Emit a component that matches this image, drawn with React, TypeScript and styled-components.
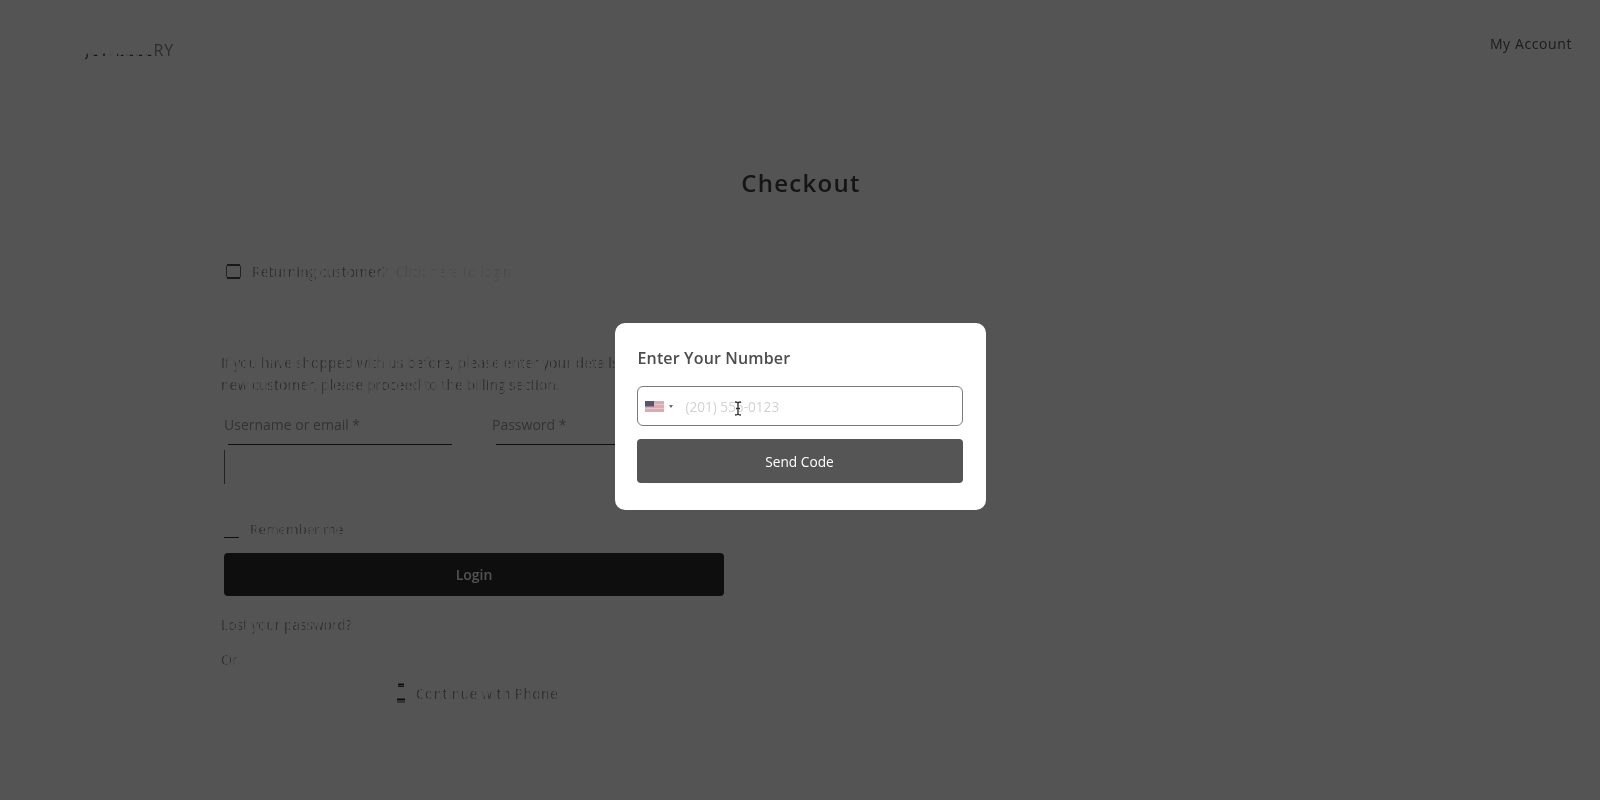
import styled, { createGlobalStyle, css } from 'styled-components';

const GlobalStyle = createGlobalStyle`
    html, body {
        margin: 0;
        padding: 0;
        height: 800px;
        overflow: hidden;
        background: #fff;
        font-family: "Open Sans", "Liberation Sans", sans-serif;
    }
    * { box-sizing: border-box; }
`;

// text behind the backdrop is half broken up in the screenshot
const broken = css`
    -webkit-mask-image: repeating-linear-gradient(90deg, #000 0 3px, rgba(0, 0, 0, 0.3) 3px 5px, #000 5px 6px, rgba(0, 0, 0, 0.15) 6px 9px);
    mask-image: repeating-linear-gradient(90deg, #000 0 3px, rgba(0, 0, 0, 0.3) 3px 5px, #000 5px 6px, rgba(0, 0, 0, 0.15) 6px 9px);
`;

const Page = styled.div`
    height: 800px;
    position: relative;
    overflow: hidden;
    background: #fff;
    filter: blur(0.35px);
`;

const Header = styled.header`
    height: 100px;
    display: flex;
    justify-content: space-between;
    align-items: flex-start;
    padding: 32px 28px 0 85px;
`;

const Logo = styled.div`
    margin-top: 8px;
    font-size: 16px;
    line-height: 20px;
    letter-spacing: 0.85px;
    width: 90px;
    white-space: nowrap;
    color: #8a8a8a;
`;

const LogoFaded = styled.span`
    background: linear-gradient(to bottom, transparent 62%, #444 72%);
    -webkit-background-clip: text;
    background-clip: text;
    color: transparent;
    ${broken}
`;

const AccountLink = styled.a`
    font-size: 14px;
    line-height: 24px;
    letter-spacing: 0.6px;
    color: #555;
`;

const Title = styled.h1`
    margin: 64px 0 0;
    padding-left: 2px;
    text-align: center;
    font-size: 24px;
    line-height: 38px;
    font-weight: 600;
    letter-spacing: 1.3px;
    color: #404040;
`;

const Content = styled.main`
    width: 510px;
    margin: 57px 0 0 221px;
`;

const Notice = styled.div`
    display: flex;
    align-items: center;
    height: 24px;
    margin-left: 4px;
    font-size: 14px;
    color: #8c8c8c;
`;

const NoticeIcon = styled.svg`
    width: 17px;
    height: 17px;
    margin-right: 10px;
    flex: none;
`;

const NoticeText = styled.span`
    ${broken}
`;

const NoticeLink = styled.span`
    margin-left: 8px;
    color: #8f8f8f;
    opacity: 0.3;
    ${broken}
`;

const Intro = styled.p`
    margin: 69px 0 0;
    width: 510px;
    font-size: 14px;
    line-height: 22px;
    color: #8c8c8c;
    white-space: nowrap;
    ${broken}
`;

const FieldRow = styled.div`
    display: grid;
    grid-template-columns: 228px 232px;
    column-gap: 40px;
    margin: 18px 0 0 3px;
`;

const Field = styled.div`
    display: flex;
    flex-direction: column;
`;

const Label = styled.label`
    font-size: 14px;
    line-height: 22px;
    color: #9a9a9a;
`;

const FieldLine = styled.div`
    height: 1px;
    margin: 8px 0 0 4px;
    background: #303030;
`;

const FieldCaret = styled.div`
    width: 1px;
    height: 34px;
    margin-top: 5px;
    background: #6a6a6a;
`;

const RememberRow = styled.div`
    display: flex;
    align-items: center;
    gap: 11px;
    height: 22px;
    margin: 34px 0 0 3px;
    font-size: 13.5px;
    color: #8c8c8c;
`;

const RememberBox = styled.span`
    display: block;
    width: 15px;
    height: 15px;
    margin-top: 3px;
    border-bottom: 1px solid #303030;
`;

const RememberText = styled.span`
    ${broken}
`;

const LoginButton = styled.button`
    display: block;
    width: 500px;
    height: 43px;
    margin: 13px 0 0 3px;
    border: none;
    border-radius: 4px;
    background: #2d2d2d;
    color: #f4f4f4;
    font-family: inherit;
    font-size: 14px;
    font-weight: 600;
`;

const LostLink = styled.p`
    margin: 18px 0 0;
    font-size: 13.7px;
    line-height: 22px;
    color: #909090;
    ${broken}
`;

const OrText = styled.p`
    margin: 13px 0 0;
    font-size: 14px;
    line-height: 22px;
    color: #8c8c8c;
    ${broken}
`;

const PhoneRow = styled.div`
    display: flex;
    align-items: center;
    justify-content: center;
    gap: 10px;
    width: 500px;
    margin: 10px 0 0 6px;
    height: 24px;
    font-size: 14px;
    letter-spacing: 0.3px;
    color: #8c8c8c;
`;

const PhoneText = styled.span`
    ${broken}
`;

const PhoneIcon = styled.svg`
    width: 10px;
    height: 20px;
    flex: none;
`;

const Backdrop = styled.div`
    position: absolute;
    inset: 0;
    background: rgba(0, 0, 0, 0.672);
    display: flex;
    justify-content: center;
    align-items: flex-start;
    padding-top: 323px;
`;

const Modal = styled.div`
    width: 371px;
    height: 187px;
    padding: 22px 23px 22px 22px;
    border-radius: 10px;
    background: #fff;
`;

const ModalTitle = styled.h2`
    margin: 0;
    padding-left: 1px;
    font-size: 16px;
    line-height: 26px;
    font-weight: 600;
    letter-spacing: 0.15px;
    color: #4d4d4d;
`;

const PhoneInput = styled.div`
    position: relative;
    display: flex;
    align-items: center;
    height: 40px;
    margin-top: 15px;
    padding-left: 7px;
    border: 1px solid #7a7a7a;
    border-radius: 6px;
    background: #fff;
`;

const Flag = styled.svg`
    width: 19px;
    height: 11px;
    flex: none;
`;

const Caret = styled.span`
    width: 0;
    height: 0;
    margin-left: 5px;
    border-left: 2.5px solid transparent;
    border-right: 2.5px solid transparent;
    border-top: 3px solid #666;
`;

const Placeholder = styled.span`
    margin-left: 13px;
    font-size: 13.6px;
    color: #d2d2d2;
`;

const TextCursor = styled.svg`
    position: absolute;
    left: 96px;
    top: 14px;
    width: 8px;
    height: 15px;
`;

const SendButton = styled.button`
    display: block;
    width: 100%;
    height: 44px;
    margin-top: 13px;
    border: none;
    border-radius: 4px;
    background: #555;
    color: #fff;
    font-family: inherit;
    font-size: 13.7px;
`;

export default function App() {
    return (
        <Page>
            <GlobalStyle />
            <Header>
                <Logo><LogoFaded>JEWELLE</LogoFaded>RY</Logo>
                <AccountLink>My Account</AccountLink>
            </Header>
            <Title>Checkout</Title>
            <Content>
                <Notice>
                    <NoticeIcon viewBox="0 0 17 17" fill="none" stroke="#2a2a2a">
                        <rect x="1.5" y="2" width="14" height="13" rx="2" strokeWidth="1" stroke="#666" />
                        <path d="M2 2h13M2 15h13" strokeWidth="1.6" />
                    </NoticeIcon>
                    <NoticeText>Returning customer?</NoticeText>
                    <NoticeLink>Click here to login</NoticeLink>
                </Notice>
                <Intro>
                    If you have shopped with us before, please enter your details below. If you are a<br />
                    new customer, please proceed to the billing section.
                </Intro>
                <FieldRow>
                    <Field>
                        <Label>Username or email *</Label>
                        <FieldLine />
                        <FieldCaret />
                    </Field>
                    <Field>
                        <Label>Password *</Label>
                        <FieldLine />
                    </Field>
                </FieldRow>
                <RememberRow>
                    <RememberBox />
                    <RememberText>Remember me</RememberText>
                </RememberRow>
                <LoginButton>Login</LoginButton>
                <LostLink>Lost your password?</LostLink>
                <OrText>Or</OrText>
                <PhoneRow>
                    <PhoneIcon viewBox="0 0 10 20" fill="none" stroke="#2a2a2a">
                        <path d="M2 1.5h6M1 16.5h8" strokeWidth="2" />
                        <path d="M2 3.5h6M1 19h8" strokeWidth="1" stroke="#444" />
                    </PhoneIcon>
                    <PhoneText>Continue with Phone</PhoneText>
                </PhoneRow>
            </Content>
            <Backdrop>
                <Modal>
                    <ModalTitle>Enter Your Number</ModalTitle>
                    <PhoneInput>
                        <Flag viewBox="0 0 19 11">
                            <rect width="19" height="11" fill="#dfa9b2" />
                            <rect y="3" width="19" height="1" fill="#e9c4ca" />
                            <rect y="7" width="19" height="1" fill="#e9c4ca" />
                            <rect width="9" height="5.5" fill="#55556b" />
                        </Flag>
                        <Caret />
                        <Placeholder>(201) 555-0123</Placeholder>
                        <TextCursor viewBox="0 0 8 15" fill="none" stroke="#333" strokeWidth="1.3">
                            <path d="M1 1c2 0 3 .5 3 1.5v10c0 1-1 1.5-3 1.5M7 1c-2 0-3 .5-3 1.5v10c0 1 1 1.5 3 1.5M2 7.5h4" />
                        </TextCursor>
                    </PhoneInput>
                    <SendButton>Send Code</SendButton>
                </Modal>
            </Backdrop>
        </Page>
    );
}
